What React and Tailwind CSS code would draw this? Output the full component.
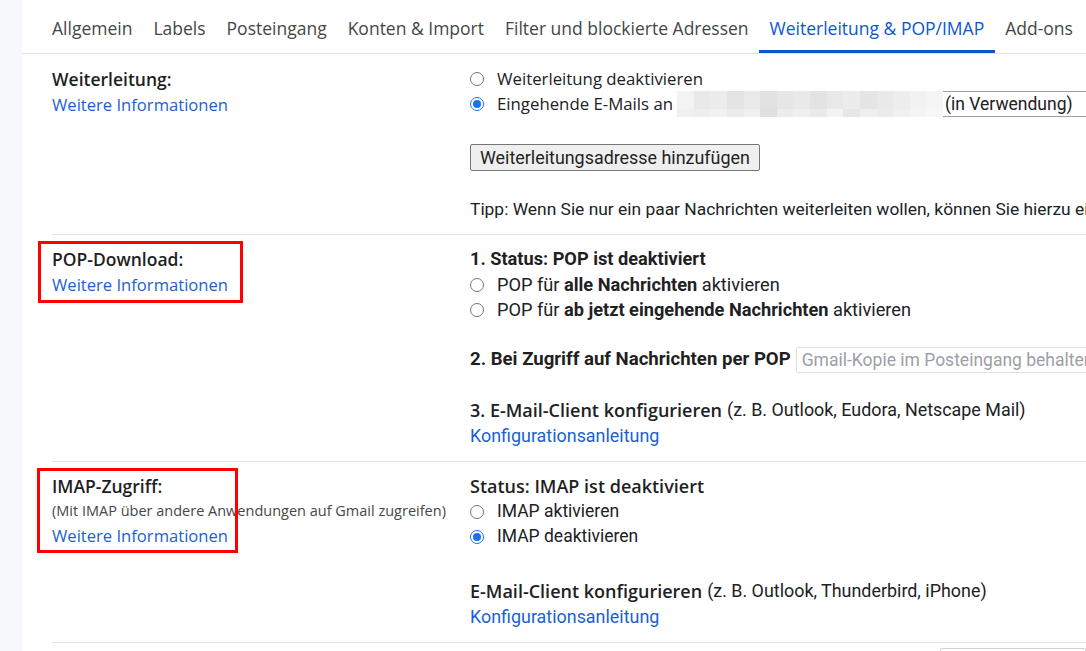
import React from "react";

const gs = "font-['Open_Sans',_'Noto_Sans',_sans-serif]";
const rb = "font-['Roboto',_'Liberation_Sans',_sans-serif]";

const tabs = [
  "Allgemein",
  "Labels",
  "Posteingang",
  "Konten & Import",
  "Filter und blockierte Adressen",
  "Weiterleitung & POP/IMAP",
  "Add-ons",
];

const blurTop = ["bg-[#f3f3f3]", "bg-[#e9e9e9]", "bg-[#ececec]", "bg-[#e4e4e4]", "bg-[#eaeaea]", "bg-[#e2e2e2]", "bg-[#e6e6e6]", "bg-[#e9e9e9]", "bg-[#e3e3e3]", "bg-[#e8e8e8]", "bg-[#ececec]", "bg-[#e5e5e5]", "bg-[#e9e9e9]", "bg-[#ededed]", "bg-[#f2f2f2]", "bg-[#f5f5f5]"];
const blurBottom = ["bg-[#f0f0f0]", "bg-[#eeeeee]", "bg-[#f1f1f1]", "bg-[#ebebeb]", "bg-[#f0f0f0]", "bg-[#e0e0e0]", "bg-[#ececec]", "bg-[#efefef]", "bg-[#eaeaea]", "bg-[#f3f3f3]", "bg-[#e7e7e7]", "bg-[#efefef]", "bg-[#ebebeb]", "bg-[#f0f0f0]", "bg-[#f4f4f4]", "bg-[#f7f7f7]"];

const Radio = ({ checked }) =>
  checked ? (
    <span className="w-[14px] h-[14px] rounded-full border-[1.5px] border-[#1a73e8] flex items-center justify-center shrink-0">
      <span className="w-[8px] h-[8px] rounded-full bg-[#1a73e8]" />
    </span>
  ) : (
    <span className="w-[14px] h-[14px] rounded-full border border-[#767676] shrink-0" />
  );

const RadioRow = ({ checked, children, cls }) => (
  <div className="flex items-center h-[25px] gap-[13px] text-[#202124]">
    <Radio checked={checked} />
    <span className={`whitespace-nowrap ${cls}`}>{children}</span>
  </div>
);

const Label = ({ children }) => (
  <div className={`h-[26px] flex items-center text-[17.5px] font-semibold text-[#1f1f1f] whitespace-nowrap ${gs}`}>{children}</div>
);

const Link = ({ children, cls }) => (
  <div className={`h-[26px] flex items-center text-[#1a5fd4] whitespace-nowrap ${cls}`}>{children}</div>
);

export default function App() {
  return (
    <div className="flex h-screen bg-[#f6f8fc] overflow-hidden">
      <div className="w-[22px] shrink-0" />
      <div className="flex-1 bg-white relative overflow-hidden">
        <div className={`flex h-[54px] border-b border-[#e3e3e3] pl-[19.5px] ${gs}`}>
          {tabs.map((t) => (
            <div
              key={t}
              className={`px-[10.5px] pt-[6px] flex items-center whitespace-nowrap text-[17.5px] border-b-[3px] ${
                t === "Weiterleitung & POP/IMAP"
                  ? "border-[#0b57d0] text-[#0b57d0]"
                  : "border-transparent text-[#444746]"
              }`}
            >
              {t}
            </div>
          ))}
        </div>

        <div className="pl-[30px]">
          {/* Weiterleitung */}
          <div className="flex border-b border-[#e3e3e3] pt-[12px] pb-[12px]">
            <div className="w-[418px] shrink-0">
              <Label>Weiterleitung:</Label>
              <Link cls={`text-[16.6px] ${gs}`}>Weitere Informationen</Link>
            </div>
            <div className="flex flex-col">
              <RadioRow cls={`text-[16.8px] ${gs}`}>Weiterleitung deaktivieren</RadioRow>
              <div className="flex items-center h-[26px] gap-[13px] text-[#202124]">
                <Radio checked />
                <span className={`whitespace-nowrap text-[16.8px] ${gs}`}>Eingehende E-Mails an</span>
                <div className={`flex items-center h-[26px] border border-[#a0a0a0] border-r-0 ${rb} text-[17.5px] text-[#202124] whitespace-nowrap -ml-[9px]`}>
                  <div className="flex flex-col w-[266px] h-[26px] -mt-px -ml-px">
                    <div className="flex h-[18px]">
                      {blurTop.map((c, i) => (
                        <div key={i} className={`flex-1 ${c}`} />
                      ))}
                    </div>
                    <div className="flex h-[8px]">
                      {blurBottom.map((c, i) => (
                        <div key={i} className={`flex-1 ${c}`} />
                      ))}
                    </div>
                  </div>
                  <span className="pl-[2px] pr-[20px]">(in Verwendung)</span>
                </div>
              </div>
              <div className="mt-[27px]">
                <button className={`h-[27px] px-[9px] bg-[#efefef] border border-[#767676] rounded-[2px] text-[17.9px] leading-none text-[#1f1f1f] whitespace-nowrap ${rb}`}>
                  Weiterleitungsadresse hinzufügen
                </button>
              </div>
              <div className={`mt-[25px] h-[26px] flex items-center text-[17.4px] text-[#202124] whitespace-nowrap ${rb}`}>
                Tipp: Wenn Sie nur ein paar Nachrichten weiterleiten wollen, können Sie hierzu einen Filter erstellen.
              </div>
            </div>
          </div>

          {/* POP */}
          <div className="flex border-b border-[#e3e3e3] pt-[11px] pb-[12px]">
            <div className="w-[418px] shrink-0">
              <Label>POP-Download:</Label>
              <Link cls={`text-[16.6px] ${gs}`}>Weitere Informationen</Link>
            </div>
            <div className={`flex flex-col ${rb}`}>
              <div className="h-[26px] flex items-center text-[18.2px] font-bold text-[#1f1f1f] whitespace-nowrap">1. Status: POP ist deaktiviert</div>
              <RadioRow cls="text-[18.2px]">
                POP für <b className="font-bold">alle Nachrichten</b> aktivieren
              </RadioRow>
              <RadioRow cls="text-[18.2px]">
                POP für <b className="font-bold">ab jetzt eingehende Nachrichten</b> aktivieren
              </RadioRow>
              <div className="mt-[25px] h-[26px] flex items-center text-[18.6px] text-[#1f1f1f] whitespace-nowrap">
                <span className="font-bold">2. Bei Zugriff auf Nachrichten per POP</span>
                <div className="ml-[5px] h-[26px] flex items-center px-[5px] border border-[#e0e0e0] rounded-[2px] text-[#9aa0a6] text-[17.5px] bg-white">
                  Gmail-Kopie im Posteingang behalten
                </div>
              </div>
              <div className="mt-[24px] h-[26px] flex items-center text-[17.9px] text-[#202124] whitespace-nowrap">
                <span className={`font-semibold text-[18px] ${gs} mr-[5px]`}>3. E-Mail-Client konfigurieren</span>(z. B. Outlook, Eudora, Netscape Mail)
              </div>
              <Link cls={`text-[17.9px] ${rb}`}>Konfigurationsanleitung</Link>
            </div>
          </div>

          {/* IMAP */}
          <div className="flex border-b border-[#e3e3e3] pt-[11px] pb-[12px]">
            <div className="w-[418px] shrink-0">
              <Label>IMAP-Zugriff:</Label>
              <div className={`h-[24px] flex items-center text-[14.5px] text-[#444746] whitespace-nowrap ${gs}`}>
                (Mit IMAP über andere Anwendungen auf Gmail zugreifen)
              </div>
              <Link cls={`text-[16.6px] ${gs}`}>Weitere Informationen</Link>
            </div>
            <div className={`flex flex-col ${rb}`}>
              <div className={`h-[26px] flex items-center text-[18px] font-semibold text-[#1f1f1f] whitespace-nowrap ${gs}`}>Status: IMAP ist deaktiviert</div>
              <RadioRow cls="text-[17.5px]">IMAP aktivieren</RadioRow>
              <RadioRow checked cls="text-[17.5px]">IMAP deaktivieren</RadioRow>
              <div className="mt-[29px] h-[26px] flex items-center text-[17.9px] text-[#202124] whitespace-nowrap">
                <span className={`font-semibold text-[18px] ${gs} mr-[5px]`}>E-Mail-Client konfigurieren</span>(z. B. Outlook, Thunderbird, iPhone)
              </div>
              <Link cls={`text-[17.9px] ${rb}`}>Konfigurationsanleitung</Link>
            </div>
          </div>
          <div className="ml-[888px] mt-[5px] h-[26px] border border-[#d0d0d0] rounded-[2px]" />
        </div>

        <div className="absolute left-[16px] top-[241px] w-[205px] h-[62px] border-[3px] border-[#ff0000]" />
        <div className="absolute left-[15px] top-[468px] w-[201px] h-[85px] border-[3px] border-[#ff0000]" />
      </div>
    </div>
  );
}
